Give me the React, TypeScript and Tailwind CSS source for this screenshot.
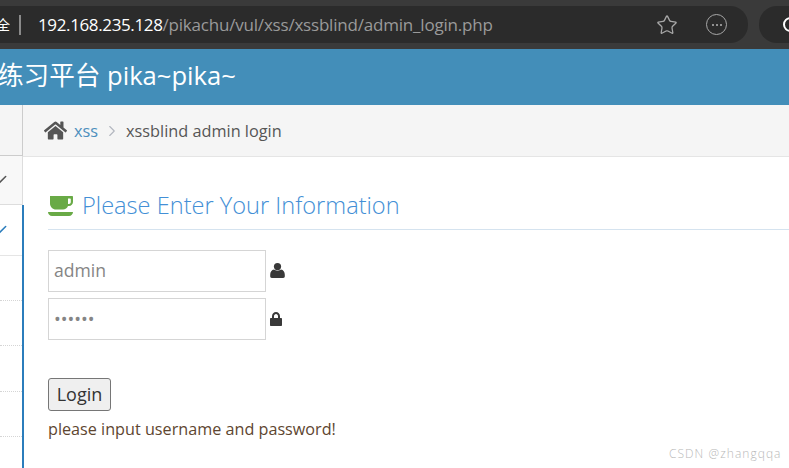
import { Star, ChevronRight, Check } from 'lucide-react'
import { FaHome } from 'react-icons/fa'

const sans = '"Open Sans", "Noto Sans CJK SC", sans-serif'

function BrowserBar() {
  return (
    <div className="flex h-[49px] items-center justify-between overflow-hidden bg-[#3a3a3a]">
      <div className="flex h-[37px] w-[748px] items-center rounded-r-[18px] bg-[#2b2b2b]">
        <span className="w-[10px] overflow-hidden text-[14px] text-white" style={{ direction: 'rtl' }}>全</span>
        <span className="ml-[9px] h-[20px] w-[2px] bg-[#8a8a8a]" />
        <span className="ml-[17px] w-[600px] text-[17px] text-white" style={{ fontFamily: sans }}>
          <span className="tracking-[-0.37px]">192.168.235.128</span>
          <span className="tracking-[-0.2px] text-[#9a9a9a]">/pikachu/vul/xss/xssblind/admin_login.php</span>
        </span>
        <Star size={22} strokeWidth={1.4} className="ml-[18px] text-[#a8a8a8]" />
        <span className="ml-[28px] flex h-[21px] w-[21px] items-center justify-center gap-[2px] rounded-full border-[1.5px] border-[#a8a8a8]">
          <i className="h-[2px] w-[2px] rounded-full bg-[#b5b5b5]" />
          <i className="h-[2px] w-[2px] rounded-full bg-[#b5b5b5]" />
          <i className="h-[2px] w-[2px] rounded-full bg-[#b5b5b5]" />
        </span>
      </div>
      <div className="flex h-[37px] w-[30px] items-center rounded-l-[18px] bg-[#2b2b2b] pl-[24px]">
        <span className="h-[15px] w-[15px] shrink-0 rounded-full border-2 border-white" />
      </div>
    </div>
  )
}

function SideNav() {
  return (
    <div className="relative z-10 w-[23px] shrink-0">
      <div className="h-[51px] border-r border-b border-[#cccccc] bg-[#f5f5f5]" />
      <div className="flex h-[49px] items-center border-r border-b border-[#dddddd] bg-[#f8f8f8]">
        <Check size={14} strokeWidth={2.6} className="-ml-[6px] text-[#555555]" />
      </div>
      <div className="h-[263px] w-[24px] border-r-2 border-[#2b7dbc] bg-white">
        <div className="flex h-[51px] items-center border-b border-[#e5e5e5]">
          <Check size={14} strokeWidth={2.6} className="-ml-[6px] text-[#2b7dbc]" />
        </div>
        <div className="h-[45px] border-b border-dotted border-[#d5d5d5]" />
        <div className="h-[45px] border-b border-dotted border-[#d5d5d5]" />
        <div className="h-[46px] border-b border-dotted border-[#d5d5d5]" />
        <div className="h-[45px] border-b border-dotted border-[#d5d5d5]" />
      </div>
    </div>
  )
}

function CoffeeIcon() {
  return (
    <svg width="25" height="20" viewBox="0 0 25 20" className="shrink-0 text-[#69aa46]">
      <path
        fill="currentColor"
        fillRule="evenodd"
        d="M2 0h22c.6 0 1 .4 1 1v5c0 2.2-1.8 4-4 4h-1c-.8 2-2.700 3.500-5 3.500H8c-3.300 0-6-2.700-6-6V0zm18 2.500V8h1c1 0 1.800-.8 1.800-2V3.500c0-.6-.4-1-1-1H20z"
      />
      <path fill="currentColor" d="M0 16h25c0 2.200-1.800 4-4 4H4c-2.200 0-4-1.800-4-4z" />
    </svg>
  )
}

function UserIcon() {
  return (
    <svg width="15" height="15" viewBox="0 0 15 15" className="mb-[2px] shrink-0 text-[#393939]">
      <circle cx="7.500" cy="3.600" r="3.600" fill="currentColor" />
      <path fill="currentColor" d="M4 6.500c1.800 1.500 5.200 1.500 7 0 2.300.4 3.800 2.300 3.800 5.200v1.600c0 1-.6 1.700-1.600 1.700H1.800C.8 15 .2 14.300.2 13.300v-1.600C.2 8.800 1.700 6.900 4 6.500z" />
    </svg>
  )
}

function LockIcon() {
  return (
    <svg width="12" height="14" viewBox="0 0 12 14" className="shrink-0 text-[#393939]">
      <path
        fill="currentColor"
        fillRule="evenodd"
        d="M2 6V4.200C2 1.900 3.800 0 6 0s4 1.900 4 4.200V6h1c.6 0 1 .4 1 1v6c0 .6-.4 1-1 1H1c-.6 0-1-.4-1-1V7c0-.6.4-1 1-1h1zm2 0h4V4.200C8 3 7.100 2 6 2S4 3 4 4.200V6z"
      />
    </svg>
  )
}

export default function App() {
  return (
    <div className="relative h-[468px] w-[789px] overflow-hidden bg-white" style={{ fontFamily: sans }}>
      <BrowserBar />
      <div className="flex h-[56px] items-center overflow-hidden bg-[#438eb9] pb-[2px] text-[25.6px] text-white">
        <span className="-ml-[2px] whitespace-nowrap">练习平台 pika~pika~</span>
      </div>
      <div className="flex h-[363px]">
        <SideNav />
        <div className="min-w-0 flex-1">
          <div className="flex h-[52px] items-center border-b border-[#e5e5e5] bg-[#f5f5f5] pl-[21px] text-[16.3px] text-[#555555]">
            <FaHome size={23} className="text-[#555555]" />
            <a className="mt-px ml-[7px] text-[#4c8fbd]">xss</a>
            <ChevronRight size={18} strokeWidth={1.5} className="ml-[5px] text-[#b2b6bf]" />
            <span className="mt-px ml-[5px]">xssblind admin login</span>
          </div>
          <div className="pl-[25px]">
            <div className="mt-[32px] flex h-[41px] items-center border-b border-[#d5e3ef] pb-[6px] text-[23.6px] font-light text-[#438fd6]">
              <CoffeeIcon />
              <span className="ml-[9px]">Please Enter Your Information</span>
            </div>
            <div className="mt-[20px] flex items-center gap-[4px]">
              <input
                readOnly
                value="admin"
                className="h-[42px] w-[218px] border border-[#d5d5d5] px-[5px] pb-[2px] text-[17.6px] text-[#858585] outline-none"
              />
              <UserIcon />
            </div>
            <div className="mt-[6px] flex items-center gap-[4px]">
              <input
                readOnly
                type="password"
                value="123456"
                className="h-[42px] w-[218px] border border-[#d5d5d5] px-[5px] text-[18px] text-[#858585] outline-none"
              />
              <LockIcon />
            </div>
            <button className="mt-[38px] block h-[33px] w-[63px] rounded-[3px] border border-[#767676] bg-[#efefef] text-[18px] text-[#333333]">
              Login
            </button>
            <p className="mt-[6px] text-[16.2px] text-[#5e4630]">please input username and password!</p>
          </div>
        </div>
      </div>
      <span className="absolute top-[445px] left-[669px] text-[12px] font-light tracking-[1.05px] text-[#b8b8b8]">CSDN @zhangqqa</span>
    </div>
  )
}
